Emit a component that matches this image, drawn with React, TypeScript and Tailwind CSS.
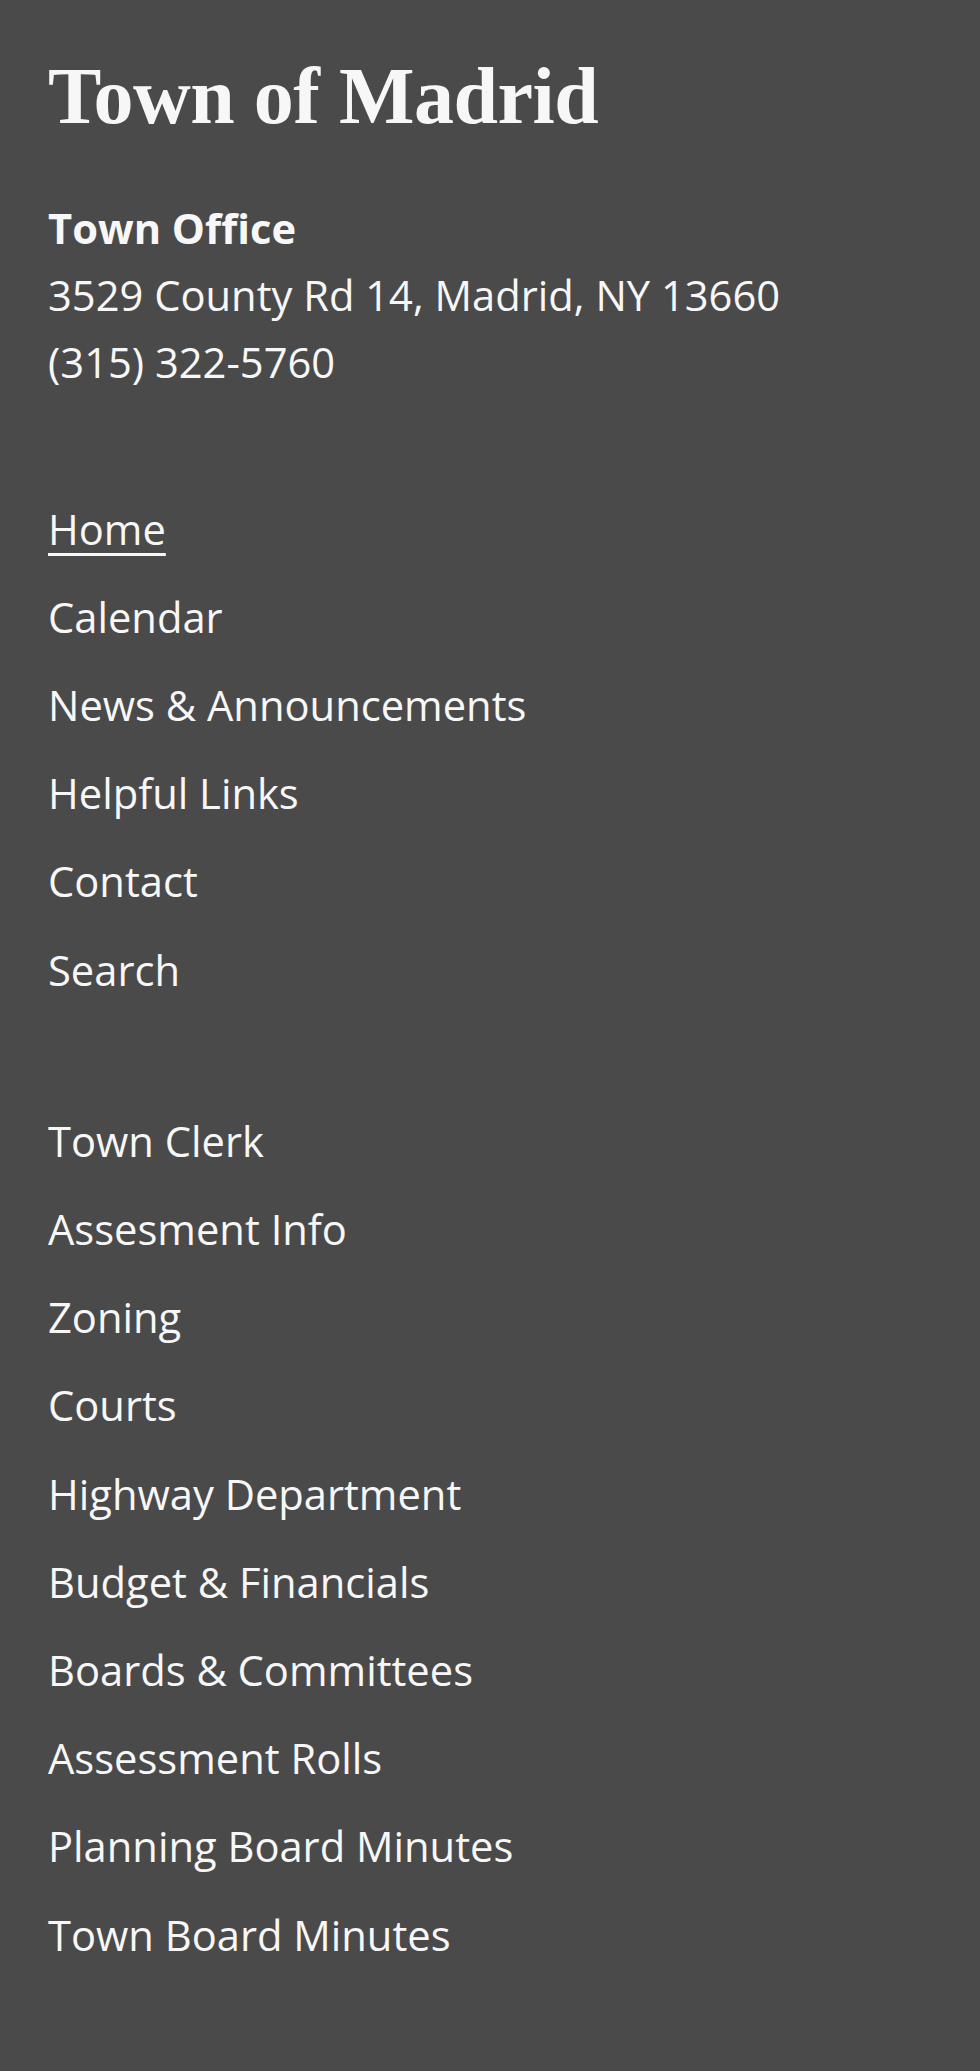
import React from "react";

const primary = [
  { label: "Home", active: true },
  { label: "Calendar" },
  { label: "News & Announcements" },
  { label: "Helpful Links" },
  { label: "Contact" },
  { label: "Search" },
];

const secondary = [
  "Town Clerk",
  "Assesment Info",
  "Zoning",
  "Courts",
  "Highway Department",
  "Budget & Financials",
  "Boards & Committees",
  "Assessment Rolls",
  "Planning Board Minutes",
  "Town Board Minutes",
];

export default function App() {
  return (
    <div className="min-h-[2071px] w-full bg-[#4a4a4a] text-[#f7f7f7] pl-[48px] pr-12 pt-[56px] pb-16 font-['Open_Sans','Noto_Sans',sans-serif]">
      <h1 className="font-['Liberation_Serif','Times_New_Roman',serif] font-bold text-[80px] leading-[80px] tracking-[-0.5px]">
        Town of Madrid
      </h1>

      <div className="mt-[58px] text-[41.7px] leading-[67.2px]">
        <p className="font-bold">Town Office</p>
        <p>3529 County Rd 14, Madrid, NY 13660</p>
        <p>(315) 322-5760</p>
      </div>

      <nav className="mt-[99px] text-[41.7px] leading-[67.2px]">
        <ul className="flex flex-col gap-[21px]">
          {primary.map((item) => (
            <li key={item.label}>
              <a
                href="#"
                className={
                  item.active
                    ? "underline decoration-[3px] underline-offset-[8px]"
                    : ""
                }
              >
                {item.label}
              </a>
            </li>
          ))}
        </ul>
        <ul className="mt-[104px] flex flex-col gap-[21px]">
          {secondary.map((label) => (
            <li key={label}>
              <a href="#">{label}</a>
            </li>
          ))}
        </ul>
      </nav>
    </div>
  );
}
